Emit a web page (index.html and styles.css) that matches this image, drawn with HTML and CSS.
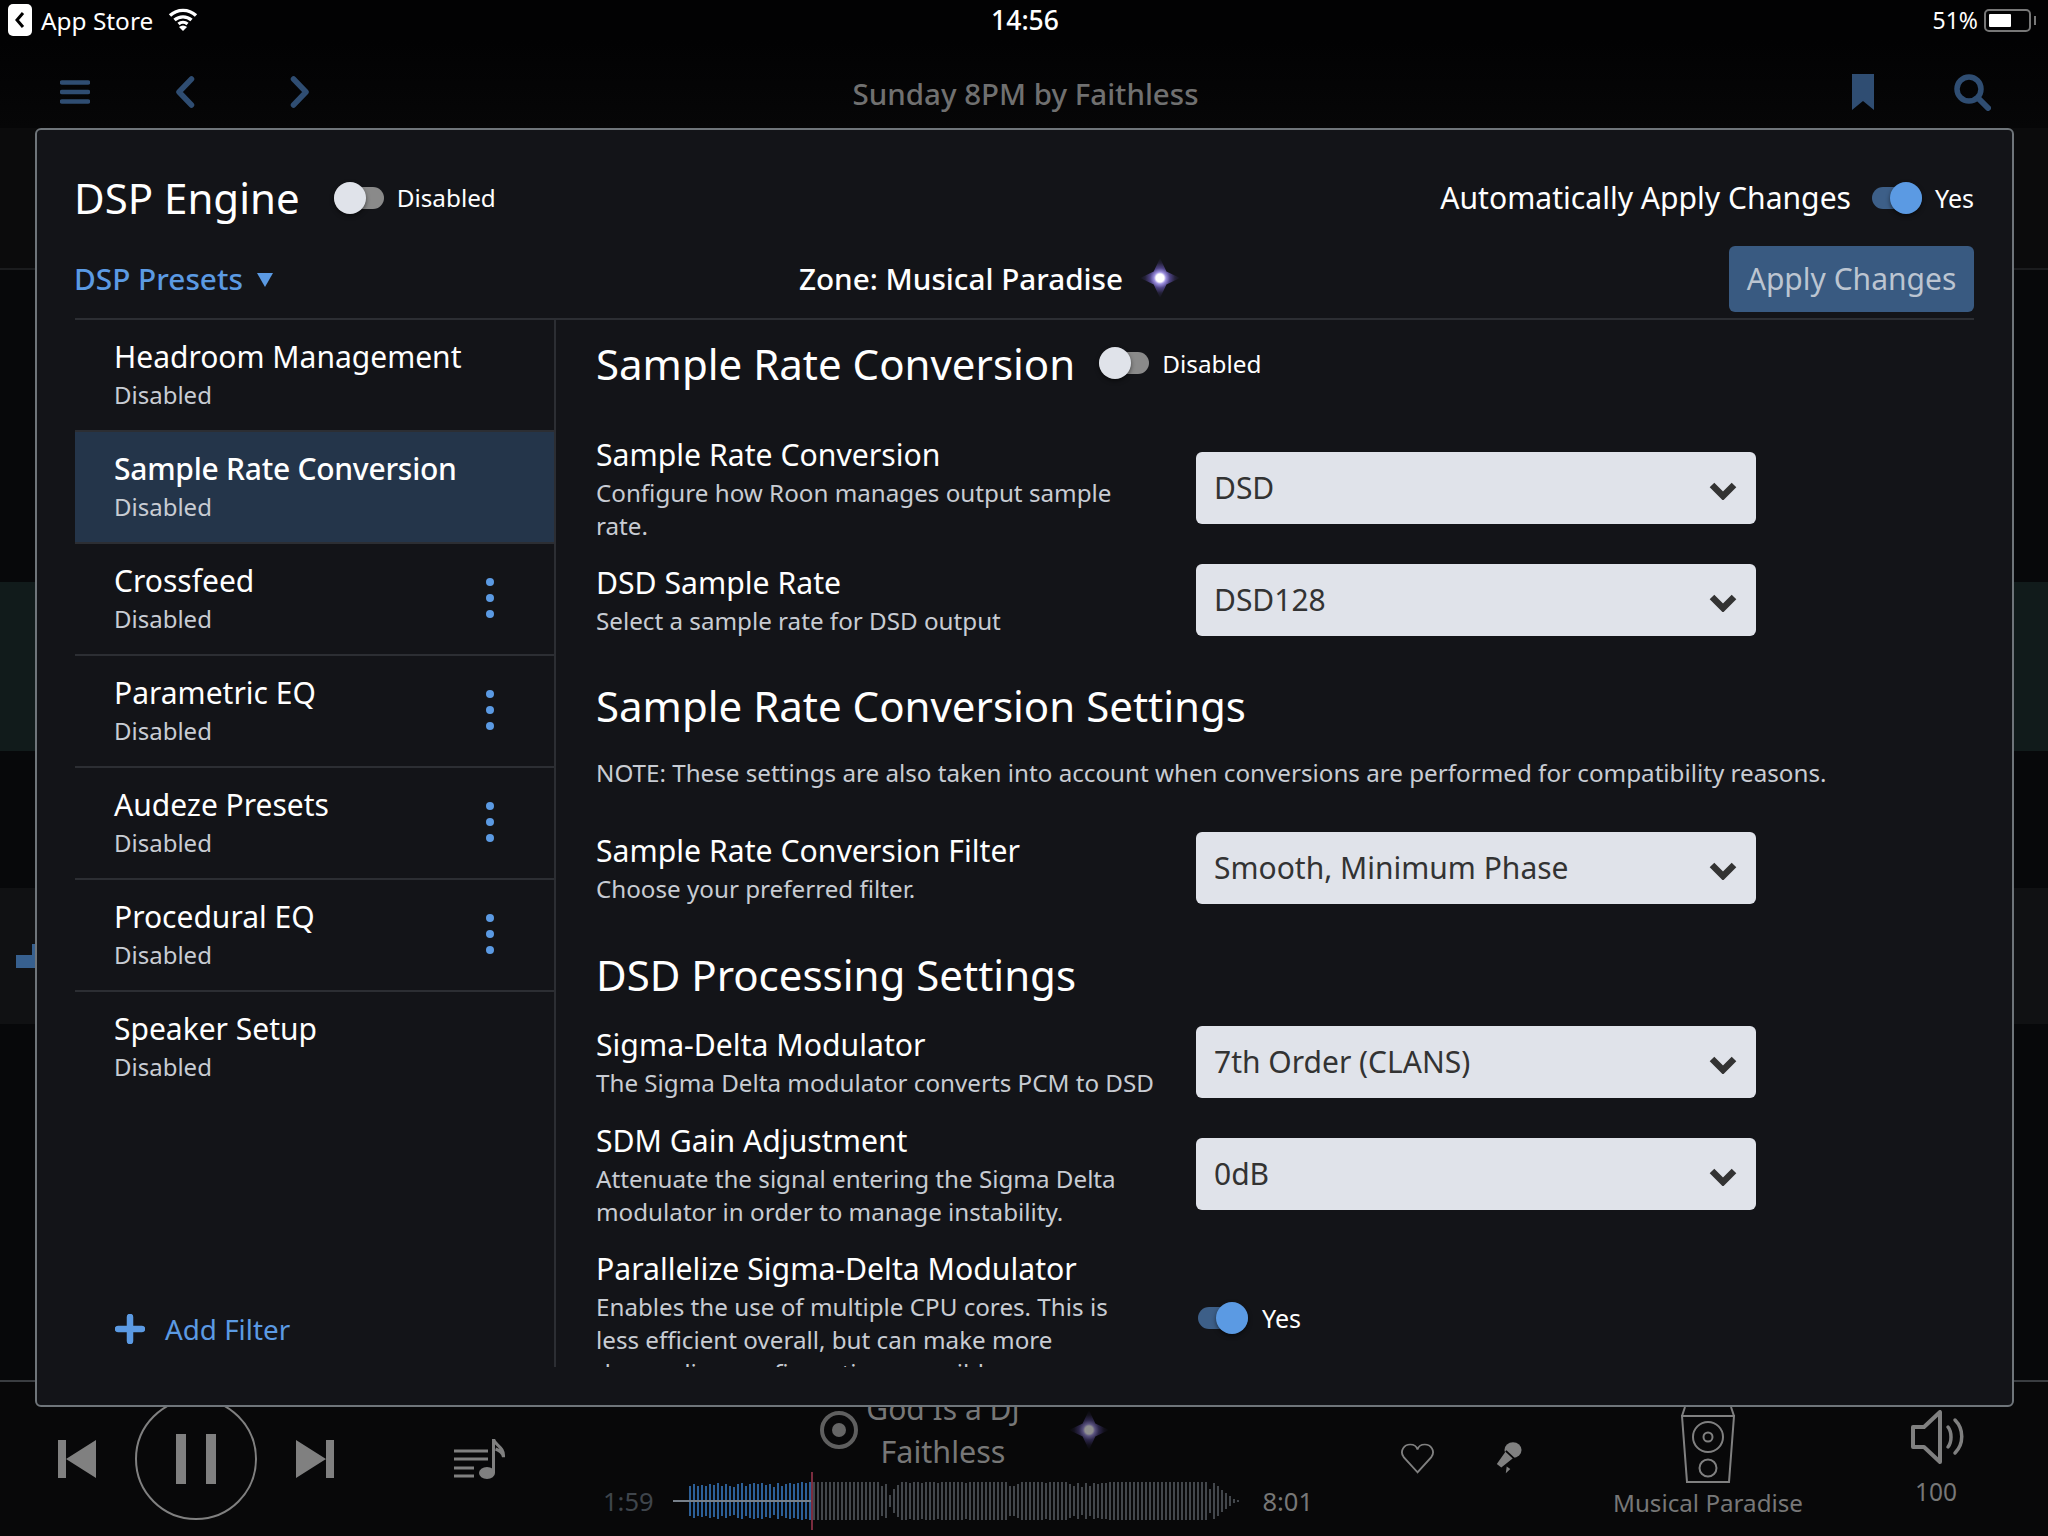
FILE: index.html
```html
<!DOCTYPE html>
<html lang="en">
<head>
<meta charset="utf-8">
<title>DSP Engine</title>
<link rel="stylesheet" href="styles.css">
</head>
<body>
<div class="page">
  <header class="status">
    <div class="status-left">
      <span class="back-chip"><svg viewBox="0 0 24 32" width="24" height="32"><rect width="24" height="32" rx="5" fill="#fff"/><path d="M15 9l-6 7 6 7" fill="none" stroke="#000" stroke-width="3"/></svg></span>
      <span class="app-store">App Store</span>
      <svg class="wifi" viewBox="0 0 30 24" width="30" height="24"><path d="M2 8.500a19 19 0 0 1 26 0M6.500 13a13 13 0 0 1 17 0M10.500 17a7 7 0 0 1 9 0" fill="none" stroke="#fff" stroke-width="3.400"/><path d="M15 24l-4-4a6 6 0 0 1 8 0z" fill="#fff"/></svg>
    </div>
    <div class="status-time">14:56</div>
    <div class="status-right">
      <span>51%</span>
      <span class="battery"><span class="battery-fill"></span></span>
      <span class="battery-tip"></span>
    </div>
  </header>

  <nav class="nav">
    <div class="nav-left">
      <svg viewBox="0 0 30 24" width="30" height="24"><path d="M2 2.500h26M2 12h26M2 21.500h26" stroke="#2f4d72" stroke-width="4.500" stroke-linecap="round"/></svg>
      <svg viewBox="0 0 20 32" width="20" height="32"><path d="M16.500 3L4 16l12.500 13" fill="none" stroke="#2f4d72" stroke-width="5.500" stroke-linecap="round" stroke-linejoin="round"/></svg>
      <svg viewBox="0 0 20 32" width="20" height="32"><path d="M3.500 3L16 16 3.500 29" fill="none" stroke="#2f4d72" stroke-width="5.500" stroke-linecap="round" stroke-linejoin="round"/></svg>
    </div>
    <div class="nav-title">Sunday 8PM by Faithless</div>
    <div class="nav-right">
      <svg viewBox="0 0 22 36" width="22" height="36"><path d="M0 0h22v36L11 27 0 36z" fill="#2f4d72"/></svg>
      <svg viewBox="0 0 38 38" width="38" height="38"><circle cx="16" cy="16" r="12" fill="none" stroke="#2f4d72" stroke-width="5.500"/><path d="M25 25l10 10" stroke="#2f4d72" stroke-width="6" stroke-linecap="round"/></svg>
    </div>
  </nav>

  <div class="bg-main">
    <div class="bg-head"></div>
    <div class="bg-gap-a"></div>
    <div class="bg-green"></div>
    <div class="bg-gap-b"></div>
    <div class="bg-row"><span class="bg-mark"></span><span class="bg-mark-tip"></span></div>
  </div>

  <footer class="player">
    <div class="transport">
      <svg viewBox="0 0 38 38" width="38" height="38"><path d="M0 0h8v38H0zM38 0v38L8 19z" fill="#808080"/></svg>
      <div class="pause"><span></span><span></span></div>
      <svg viewBox="0 0 38 38" width="38" height="38"><path d="M30 0h8v38h-8zM0 0v38l30-19z" fill="#808080"/></svg>
      <svg class="queue" viewBox="0 0 52 40" width="52" height="40"><path d="M0 12h34M0 20h34M0 29h20M0 37h20" stroke="#808080" stroke-width="3"/><ellipse cx="33" cy="34" rx="8" ry="6" fill="#808080"/><path d="M39.500 34V0c1 6 11 8 10 18-1-5-5-7-8-8" fill="none" stroke="#808080" stroke-width="3"/></svg>
    </div>
    <div class="track">
      <div class="track-info">
        <div class="track-title">God Is a DJ</div>
        <div class="track-artist">Faithless</div>
        <svg class="disc" viewBox="0 0 38 50" width="38" height="50"><circle cx="19" cy="25" r="17" fill="none" stroke="#5f5f5f" stroke-width="4"/><circle cx="19" cy="25" r="7" fill="#666"/></svg>
        <span class="spark spark-dim"></span>
      </div>
      <div class="seek">
        <span class="time time-start">1:59</span>
        <svg id="wave" class="wave" viewBox="0 0 570 60" width="570" height="60"></svg>
        <span class="time time-end">8:01</span>
      </div>
    </div>
    <div class="actions">
      <svg viewBox="0 0 38 38" width="35" height="32" preserveAspectRatio="none"><path d="M19 36L4 18C-1 10 5 3 11 3c4 0 7 2 8 6 1-4 4-6 8-6 6 0 12 7 7 15z" fill="none" stroke="#808080" stroke-width="2"/></svg>
      <svg viewBox="0 0 30 40" width="27" height="33" preserveAspectRatio="none"><circle cx="20" cy="11" r="9.500" fill="#808080"/><path d="M13 11l9 8L7 32l-5-4zM13 31l4 3-5 5z" fill="#808080"/><path d="M12 12l9 9" stroke="#060607" stroke-width="2"/></svg>
    </div>
    <div class="zone">
      <svg viewBox="0 0 54 76" width="54" height="76"><g fill="none" stroke="#808080" stroke-width="2"><path d="M1 9l5 66h42l5-66zM1 9l3-9M53 9l-3-9"/><circle cx="27" cy="30" r="15"/><circle cx="27" cy="30" r="4.500"/><circle cx="27" cy="61" r="8.500"/></g></svg>
      <span>Musical Paradise</span>
    </div>
    <div class="volume">
      <svg viewBox="0 0 56 54" width="56" height="54"><g fill="none" stroke="#808080" stroke-linecap="round" stroke-linejoin="round"><path d="M2 17h11L29 2v50L13 37H2z" stroke-width="4"/><path d="M37 17c4 5 4 15 0 20M44 10c9 9 9 24 0 33" stroke-width="3.500"/></g></svg>
      <span>100</span>
    </div>
  </footer>

  <section class="modal">
    <div class="modal-head">
      <div class="engine">
        <h1 class="engine-title">DSP Engine</h1>
        <span class="switch"><span class="knob"></span></span>
        <span class="switch-label">Disabled</span>
      </div>
      <div class="auto">
        <span class="auto-label">Automatically Apply Changes</span>
        <span class="switch switch-on"><span class="knob"></span></span>
        <span class="switch-label">Yes</span>
      </div>
    </div>
    <div class="modal-bar">
      <div class="presets">DSP Presets <span class="caret"></span></div>
      <div class="zone-label">Zone: Musical Paradise <span class="spark"></span></div>
      <div class="apply">Apply Changes</div>
    </div>
    <div class="modal-body">
      <aside class="filters">
        <div class="filter"><div class="filter-name">Headroom Management</div><div class="filter-state">Disabled</div></div>
        <div class="filter filter-active"><div class="filter-name">Sample Rate Conversion</div><div class="filter-state">Disabled</div></div>
        <div class="filter"><div><div class="filter-name">Crossfeed</div><div class="filter-state">Disabled</div></div><span class="dots"><i></i><i></i><i></i></span></div>
        <div class="filter"><div><div class="filter-name">Parametric EQ</div><div class="filter-state">Disabled</div></div><span class="dots"><i></i><i></i><i></i></span></div>
        <div class="filter"><div><div class="filter-name">Audeze Presets</div><div class="filter-state">Disabled</div></div><span class="dots"><i></i><i></i><i></i></span></div>
        <div class="filter"><div><div class="filter-name">Procedural EQ</div><div class="filter-state">Disabled</div></div><span class="dots"><i></i><i></i><i></i></span></div>
        <div class="filter filter-last"><div class="filter-name">Speaker Setup</div><div class="filter-state">Disabled</div></div>
        <div class="add-filter"><svg viewBox="0 0 30 30" width="30" height="30"><path d="M15 3v24M3 15h24" stroke="#5b9ae3" stroke-width="6.500" stroke-linecap="round"/></svg><span>Add Filter</span></div>
      </aside>
      <main class="settings">
        <div class="section-head">
          <h2 class="section-title">Sample Rate Conversion</h2>
          <span class="switch"><span class="knob"></span></span>
          <span class="switch-label">Disabled</span>
        </div>
        <div class="row row-src">
          <div class="row-text"><div class="row-name">Sample Rate Conversion</div><div class="row-desc">Configure how Roon manages output sample rate.</div></div>
          <div class="select"><span>DSD</span><svg viewBox="0 0 28 18" width="28" height="18"><path d="M3 3l11 11L25 3" fill="none" stroke="#333" stroke-width="6.500"/></svg></div>
        </div>
        <div class="row row-dsd">
          <div class="row-text"><div class="row-name">DSD Sample Rate</div><div class="row-desc">Select a sample rate for DSD output</div></div>
          <div class="select"><span>DSD128</span><svg viewBox="0 0 28 18" width="28" height="18"><path d="M3 3l11 11L25 3" fill="none" stroke="#333" stroke-width="6.500"/></svg></div>
        </div>
        <h2 class="section-title section-two">Sample Rate Conversion Settings</h2>
        <p class="note">NOTE: These settings are also taken into account when conversions are performed for compatibility reasons.</p>
        <div class="row row-filter">
          <div class="row-text"><div class="row-name">Sample Rate Conversion Filter</div><div class="row-desc">Choose your preferred filter.</div></div>
          <div class="select"><span>Smooth, Minimum Phase</span><svg viewBox="0 0 28 18" width="28" height="18"><path d="M3 3l11 11L25 3" fill="none" stroke="#333" stroke-width="6.500"/></svg></div>
        </div>
        <h2 class="section-title section-three">DSD Processing Settings</h2>
        <div class="row row-sigma">
          <div class="row-text"><div class="row-name">Sigma-Delta Modulator</div><div class="row-desc">The Sigma Delta modulator converts PCM to DSD</div></div>
          <div class="select"><span>7th Order (CLANS)</span><svg viewBox="0 0 28 18" width="28" height="18"><path d="M3 3l11 11L25 3" fill="none" stroke="#333" stroke-width="6.500"/></svg></div>
        </div>
        <div class="row row-gain">
          <div class="row-text"><div class="row-name">SDM Gain Adjustment</div><div class="row-desc">Attenuate the signal entering the Sigma Delta modulator in order to manage instability.</div></div>
          <div class="select"><span>0dB</span><svg viewBox="0 0 28 18" width="28" height="18"><path d="M3 3l11 11L25 3" fill="none" stroke="#333" stroke-width="6.500"/></svg></div>
        </div>
        <div class="row row-par">
          <div class="row-text"><div class="row-name">Parallelize Sigma-Delta Modulator</div><div class="row-desc">Enables the use of multiple CPU cores. This is less efficient overall, but can make more demanding configurations possible.</div></div>
          <div class="par-toggle"><span class="switch switch-on"><span class="knob"></span></span><span class="switch-label">Yes</span></div>
        </div>
      </main>
    </div>
  </section>
</div>
<script src="wave.js"></script>
</body>
</html>
```
FILE: styles.css
```css
* { box-sizing: border-box; }
html, body { margin: 0; padding: 0; }
body { background: #07080a; font-family: "Noto Sans", sans-serif; color: #fff; }
h1, h2, p { margin: 0; font-weight: 400; }

.page { position: relative; width: 2048px; height: 1536px; display: flex; flex-direction: column; overflow: hidden; background: #07080a; }

/* status bar */
.status { height: 40px; flex: none; display: grid; grid-template-columns: 1fr auto 1fr; align-items: center; padding: 0 12px 0 8px; font-size: 23px; background: #020203; }
.status-left { display: flex; align-items: center; gap: 9px; }
.app-store { font-size: 24.400px; }
.back-chip { display: flex; }
.wifi { margin-left: 6px; margin-top: -2px; }
.status-time { font-weight: 500; font-size: 26.500px; margin-left: 6px; }
.status-right { display: flex; align-items: center; justify-content: flex-end; gap: 6px; }
.battery { width: 47px; height: 23px; border: 2px solid #777; border-radius: 5px; padding: 3px; display: flex; }
.battery-fill { width: 22px; background: #fff; border-radius: 1px; }
.battery-tip { width: 2px; height: 9px; background: #777; margin-left: -3px; }

/* nav */
.nav { height: 88px; flex: none; display: grid; grid-template-columns: 1fr auto 1fr; align-items: center; padding: 16px 57px 0 60px; background: linear-gradient(#020203, #060607); }
.nav-left { display: flex; align-items: center; }
.nav-left svg:nth-child(2) { margin-left: 85px; }
.nav-left svg:nth-child(3) { margin-left: 95px; }
.nav-title { font-size: 29.500px; font-weight: 500; color: #707070; margin-top: 2px; }
.nav-right { display: flex; align-items: center; justify-content: flex-end; gap: 79px; }

/* what shows behind the modal in the left strip */
.bg-main { flex: 1; display: flex; flex-direction: column; background: #07080a; }
.bg-head { height: 142px; flex: none; background: #0b0b0c; border-bottom: 2px solid #1b1c1e; }
.bg-gap-a { height: 312px; flex: none; }
.bg-green { height: 169px; flex: none; background: #111b1b; }
.bg-gap-b { height: 137px; flex: none; }
.bg-row { height: 136px; flex: none; background: #101113; position: relative; }
.bg-mark { position: absolute; left: 16px; top: 67px; width: 19px; height: 13px; background: #37608f; }
.bg-mark-tip { position: absolute; left: 32px; top: 56px; width: 3px; height: 12px; background: #37608f; }

/* player */
.player { height: 156px; flex: none; position: relative; background: #080809; border-top: 2px solid #3a3d41; }
.transport, .track, .actions, .zone, .volume { position: absolute; }
.transport { left: 58px; top: 0; height: 154px; display: flex; align-items: center; }
.pause { width: 122px; height: 122px; border: 2px solid #808080; border-radius: 50%; margin-left: 39px; margin-right: 39px; display: flex; align-items: center; justify-content: center; gap: 20px; }
.pause span { width: 10px; height: 50px; background: #808080; }
.queue { margin-left: 120px; }
.track { left: 603px; top: 0; width: 710px; height: 154px; }
.track-info { position: relative; height: 92px; text-align: center; color: #777; overflow: hidden; width: 680px; }
.track-title { font-size: 30px; line-height: 42px; margin-top: 6px; height: 42px; color: #777; }
.track-artist { font-size: 30.500px; line-height: 42px; }
.disc { position: absolute; left: 217px; top: 23px; }
.spark { display: inline-block; width: 40px; height: 40px; background: radial-gradient(circle, #fff 0 4px, #9d90e0 6px, rgba(125,105,220,.55) 10px, rgba(110,90,200,.18) 15px, transparent 20px); clip-path: polygon(50% 0, 66% 34%, 100% 50%, 66% 66%, 50% 100%, 34% 66%, 0 50%, 34% 34%); vertical-align: middle; }
.spark-dim { position: absolute; left: 466px; top: 28px; opacity: .55; }
.seek { display: flex; align-items: center; height: 60px; margin-top: -3px; }
.time { font-size: 25.500px; }
.time-start { color: #3f454c; width: 54px; }
.time-end { color: #777; margin-left: 19px; }
.wave { flex: none; margin-left: 17px; }
.actions { left: 1400px; top: 59px; display: flex; align-items: center; gap: 60px; }
.zone { left: 1600px; width: 216px; top: 25px; display: flex; flex-direction: column; align-items: center; color: #777; font-size: 24.200px; }
.zone span { margin-top: 3px; }
.volume { left: 1905px; width: 62px; top: 28px; display: flex; flex-direction: column; align-items: center; color: #777; font-size: 24.500px; }
.volume svg { margin-left: 6px; }
.volume span { margin-top: 11px; }

/* modal */
.modal { position: absolute; left: 35px; top: 128px; width: 1979px; height: 1279px; background: #131418; border: 2px solid #6f757a; border-radius: 6px; padding: 0 38px; display: flex; flex-direction: column; }
.modal-head { height: 102px; flex: none; display: flex; justify-content: space-between; align-items: center; padding-top: 33px; }
.engine, .auto { display: flex; align-items: center; }
.engine-title { font-size: 42px; margin-right: 34px; margin-left: -1px; }
.auto-label { font-size: 30.100px; margin-right: 21px; }
.switch { position: relative; width: 50px; height: 22px; border-radius: 11px; background: #8a8a8a; flex: none; display: inline-block; margin-right: 13px; }
.knob { position: absolute; left: 0; top: -5px; width: 32px; height: 32px; border-radius: 50%; background: #e0e3ea; box-shadow: 0 2px 4px rgba(0,0,0,.5); }
.switch-on { background: #3d5f88; }
.switch-on .knob { left: 18px; background: #5b9ae3; }
.switch-label { font-size: 24.300px; }
.auto .switch-label, .par-toggle .switch-label { font-size: 25px; }
.modal-bar { height: 88px; flex: none; display: grid; grid-template-columns: 1fr auto 1fr; align-items: center; border-bottom: 2px solid #2c2e33; padding: 14px 0 6px; }
.presets { font-size: 29.800px; color: #5b9ae3; font-weight: 500; display: flex; align-items: center; gap: 14px; margin-left: -1px; margin-bottom: 2px; }
.caret { width: 0; height: 0; border-left: 8px solid transparent; border-right: 8px solid transparent; border-top: 14px solid #5b9ae3; margin-top: 4px; }
.zone-label { font-size: 29.700px; font-weight: 500; display: flex; align-items: center; gap: 17px; margin-right: 70px; margin-bottom: 2px; }
.apply { justify-self: end; width: 245px; height: 66px; border-radius: 6px; background: #395a81; color: #bcc5d1; font-size: 30px; display: flex; align-items: center; justify-content: center; padding-bottom: 2px; }

.modal-body { height: 1047px; flex: none; display: flex; overflow: hidden; }
.filters { width: 481px; flex: none; border-right: 2px solid #2c2e33; position: relative; }
.filter { height: 112px; border-bottom: 2px solid #2c2e33; padding: 16px 40px 0 39px; display: flex; flex-direction: column; }
.filter:has(.dots) { flex-direction: row; justify-content: space-between; }
.filter-active { background: #24354a; border-top: 2px solid #2c2e33; margin-top: -2px; height: 114px; }
.filter-active .filter-name { font-weight: 500; letter-spacing: -0.250px; }
.filter-last { border-bottom: 0; }
.filter-name { font-size: 30px; line-height: 41px; }
.filter-state { font-size: 24px; line-height: 36px; color: #c8ccd3; }
.dots { display: flex; flex-direction: column; gap: 8px; padding-top: 18px; margin-right: 20px; }
.dots i { width: 8px; height: 8px; border-radius: 50%; background: #5b9ae3; display: block; }
.add-filter { position: absolute; left: 40px; top: 990px; display: flex; align-items: center; gap: 20px; color: #5b9ae3; font-size: 27.800px; }

.settings { flex: 1; padding-left: 40px; min-width: 0; overflow: hidden; }
.section-head { display: flex; align-items: center; height: 86px; }
.section-title { font-size: 42px; line-height: 57px; }
.section-head .section-title { margin-right: 24px; }
.row { display: flex; align-items: flex-start; }
.row-text { width: 560px; margin-right: 40px; flex: none; }
.row-name { font-size: 30.200px; line-height: 40px; margin-top: -1px; margin-bottom: 1px; }
.row-desc { font-size: 24.200px; line-height: 33px; color: #c8ccd3; }
.select { width: 560px; height: 72px; border-radius: 6px; background: #e0e3ea; color: #333; font-size: 30px; display: flex; align-items: center; justify-content: space-between; padding: 0 19px 2px 18px; }
.select svg { margin-top: 7px; }
.par-toggle { display: flex; align-items: center; margin-top: 51px; margin-left: 2px; }
.par-toggle .switch { margin-right: 14px; }
.row-src { margin-top: 30px; height: 128px; }
.row-src .select { margin-top: 16px; }
.row-dsd { height: 112px; }
.section-two { margin-top: 1px; }
.note { font-size: 24.200px; line-height: 33px; color: #c8ccd3; margin-top: 22px; }
.row-filter { margin-top: 43px; height: 107px; }
.section-three { margin-top: 7px; }
.row-sigma { margin-top: 23px; height: 96px; }
.row-gain { height: 128px; }
.row-gain .select { margin-top: 16px; }
.row-par { height: 170px; }
```
FILE: wave.js
```js
// Draws the seek-bar waveform: one vertical bar every 4px, played part blue.
(function () {
  var svg = document.getElementById('wave');
  var heights = [2,2,2,2,
    30,34,30,32,30,34,32,36,30,34,30,28,34,36,30,34,36,34,36,32,34,28,36,30,34,36,34,36,38,36,38,
    38,38,38,38,38,38,38,38,38,38,38,38,38,38,38,38,38,
    30,34,12,24,32,
    38,38,36,38,38,36,38,38,38,36,38,38,38,38,38,38,36,38,38,38,38,38,38,38,38,38,38,
    30,30,34,
    38,38,38,38,38,38,36,38,38,38,38,38,
    34,30,36,28,36,30,36,34,36,36,
    38,38,38,38,38,38,38,38,38,38,38,38,38,38,38,38,38,38,38,38,38,38,38,38,38,
    24,36,30,22,16,10,4,2];
  var played = '', rest = '';
  heights.forEach(function (h, i) {
    var x = 1 + i * 4;
    var seg = 'M' + x + ' ' + (30 - h / 2) + 'v' + h;
    if (x < 139) { played += seg; } else { rest += seg; }
  });
  function path(d, color, w) {
    var p = document.createElementNS('http://www.w3.org/2000/svg', 'path');
    p.setAttribute('d', d);
    p.setAttribute('stroke', color);
    p.setAttribute('stroke-width', w);
    p.setAttribute('fill', 'none');
    svg.appendChild(p);
  }
  path(rest, '#43474c', 2);
  path(played, '#2c5f97', 2);
  path('M0 30H139', '#77808a', 2);
  path('M139 1V59', '#7a2c3e', 2);
})();
```
